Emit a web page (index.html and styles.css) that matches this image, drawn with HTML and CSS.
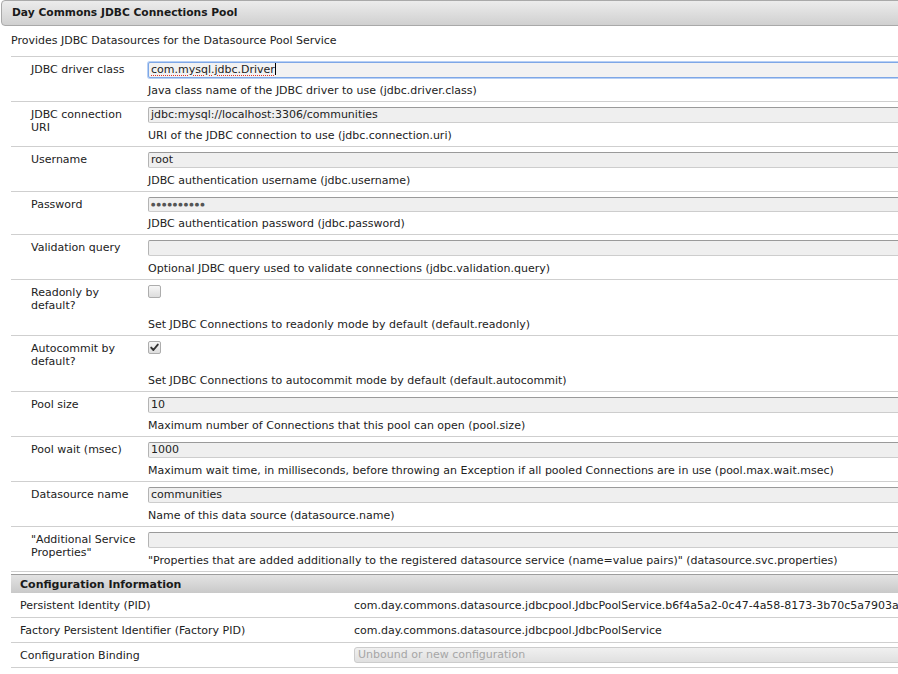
FILE: index.html
```html
<!DOCTYPE html>
<html>
<head>
<meta charset="utf-8">
<title>Day Commons JDBC Connections Pool</title>
<link rel="stylesheet" href="styles.css">
</head>
<body>
<div class="page">
  <div class="titlebar">Day Commons JDBC Connections Pool</div>
  <div class="intro">Provides JDBC Datasources for the Datasource Pool Service</div>

  <div class="props">
    <div class="row">
      <div class="label">JDBC driver class</div>
      <div class="field">
        <div class="input focused"><span class="spell">com.mysql.jdbc.Driver</span><span class="caret"></span></div>
        <div class="desc">Java class name of the JDBC driver to use (jdbc.driver.class)</div>
      </div>
    </div>
    <div class="row">
      <div class="label">JDBC connection URI</div>
      <div class="field">
        <div class="input">jdbc:mysql://localhost:3306/communities</div>
        <div class="desc">URI of the JDBC connection to use (jdbc.connection.uri)</div>
      </div>
    </div>
    <div class="row">
      <div class="label">Username</div>
      <div class="field">
        <div class="input">root</div>
        <div class="desc">JDBC authentication username (jdbc.username)</div>
      </div>
    </div>
    <div class="row">
      <div class="label">Password</div>
      <div class="field field-tight">
        <div class="input password">&#9679;&#9679;&#9679;&#9679;&#9679;&#9679;&#9679;&#9679;&#9679;&#9679;</div>
        <div class="desc">JDBC authentication password (jdbc.password)</div>
      </div>
    </div>
    <div class="row">
      <div class="label">Validation query</div>
      <div class="field">
        <div class="input"></div>
        <div class="desc">Optional JDBC query used to validate connections (jdbc.validation.query)</div>
      </div>
    </div>
    <div class="row">
      <div class="label">Readonly by default?</div>
      <div class="field">
        <div class="checkwrap"><span class="checkbox"></span></div>
        <div class="desc">Set JDBC Connections to readonly mode by default (default.readonly)</div>
      </div>
    </div>
    <div class="row">
      <div class="label">Autocommit by default?</div>
      <div class="field">
        <div class="checkwrap"><span class="checkbox checked"><svg width="11" height="11" viewBox="0 0 11 11"><path d="M2.2 5.6 L4.4 8 L8.8 2.6" fill="none" stroke="#333" stroke-width="1.9" stroke-linecap="round" stroke-linejoin="round"/></svg></span></div>
        <div class="desc">Set JDBC Connections to autocommit mode by default (default.autocommit)</div>
      </div>
    </div>
    <div class="row">
      <div class="label">Pool size</div>
      <div class="field">
        <div class="input">10</div>
        <div class="desc">Maximum number of Connections that this pool can open (pool.size)</div>
      </div>
    </div>
    <div class="row">
      <div class="label">Pool wait (msec)</div>
      <div class="field">
        <div class="input">1000</div>
        <div class="desc">Maximum wait time, in milliseconds, before throwing an Exception if all pooled Connections are in use (pool.max.wait.msec)</div>
      </div>
    </div>
    <div class="row">
      <div class="label">Datasource name</div>
      <div class="field">
        <div class="input">communities</div>
        <div class="desc">Name of this data source (datasource.name)</div>
      </div>
    </div>
    <div class="row">
      <div class="label">"Additional Service Properties"</div>
      <div class="field">
        <div class="input"></div>
        <div class="desc">"Properties that are added additionally to the registered datasource service (name=value pairs)" (datasource.svc.properties)</div>
      </div>
    </div>
  </div>

  <div class="config">
    <div class="config-head">Configuration Information</div>
    <div class="config-row">
      <div class="config-label">Persistent Identity (PID)</div>
      <div class="config-value">com.day.commons.datasource.jdbcpool.JdbcPoolService.b6f4a5a2-0c47-4a58-8173-3b70c5a7903a</div>
    </div>
    <div class="config-row">
      <div class="config-label">Factory Persistent Identifier (Factory PID)</div>
      <div class="config-value">com.day.commons.datasource.jdbcpool.JdbcPoolService</div>
    </div>
    <div class="config-row">
      <div class="config-label">Configuration Binding</div>
      <div class="config-value"><div class="select">Unbound or new configuration</div></div>
    </div>
  </div>
</div>
</body>
</html>
```

FILE: styles.css
```css
html, body {
  margin: 0;
  padding: 0;
  background: #fff;
  overflow: hidden;
}

body {
  font-family: "DejaVu Sans", Verdana, sans-serif;
  font-size: 11px;
  color: #222;
}

.page {
  width: 930px;
}

.titlebar {
  margin-left: 1px;
  height: 24px;
  line-height: 24px;
  padding-left: 10px;
  border: 1px solid #a9a9a9;
  border-radius: 4px;
  background: linear-gradient(#ececec, #d0d0d0);
  font-weight: bold;
  font-size: 10.7px;
  color: #1a1a1a;
}

.intro {
  height: 30px;
  line-height: 30px;
  padding-left: 11px;
}

.props {
  margin-left: 11px;
  border-bottom: 1px solid #cfcfcf;
}

.row {
  display: grid;
  grid-template-columns: 137px 1fr;
  border-top: 1px solid #cfcfcf;
  padding: 5px 0 3px;
}

.label {
  padding: 1px 8px 0 20px;
  line-height: 13px;
}

.field {
  display: flex;
  flex-direction: column;
  gap: 5px;
}

.field-tight {
  gap: 4px;
}

.input {
  box-sizing: border-box;
  height: 16px;
  line-height: 14px;
  padding: 0 2px;
  border: 1px solid #b4b4b4;
  border-top-color: #9a9a9a;
  border-bottom-color: #cdcdcd;
  border-radius: 2px;
  background: #efefef;
  white-space: nowrap;
  overflow: hidden;
}

.input.focused {
  border-color: #7ea7e6;
  box-shadow: 0 0 0 1px #b7d0f5;
  background: #f2f2f2;
}

.spell {
  text-decoration: underline dotted #e0362b;
  text-decoration-thickness: 1px;
  text-underline-offset: 2px;
}

.caret {
  display: inline-block;
  width: 1px;
  height: 12px;
  background: #000;
  vertical-align: -2px;
}

.input.password {
  height: 15px;
  line-height: 13px;
  font-size: 5px;
  letter-spacing: 1.1px;
  color: #555;
}

.desc {
  line-height: 15px;
  white-space: nowrap;
}

.checkwrap {
  height: 27px;
}

.checkbox {
  display: flex;
  align-items: center;
  justify-content: center;
  box-sizing: border-box;
  width: 13px;
  height: 13px;
  border: 1px solid #adadad;
  border-radius: 2px;
  background: linear-gradient(#f7f7f7, #dddddd);
}

.checkbox svg {
  display: block;
}

.config {
  margin: 2px 0 0 11px;
}

.config-head {
  height: 17px;
  line-height: 17px;
  padding: 1px 0 0 9px;
  border-top: 1px solid #9d9d9d;
  background: linear-gradient(#e3e3e3, #c9c9c9);
  font-weight: bold;
  color: #1a1a1a;
}

.config-row {
  display: grid;
  grid-template-columns: 343px 1fr;
  height: 24px;
  align-items: center;
  border-bottom: 1px solid #cfcfcf;
}

.config-label {
  padding-left: 9px;
}

.config-value {
  white-space: nowrap;
}

.select {
  box-sizing: border-box;
  height: 16px;
  line-height: 14px;
  padding: 0 3px;
  border: 1px solid #cccccc;
  border-radius: 3px;
  background: linear-gradient(#f0f0f0, #e0e0e0);
  color: #a6a6a6;
}
```
